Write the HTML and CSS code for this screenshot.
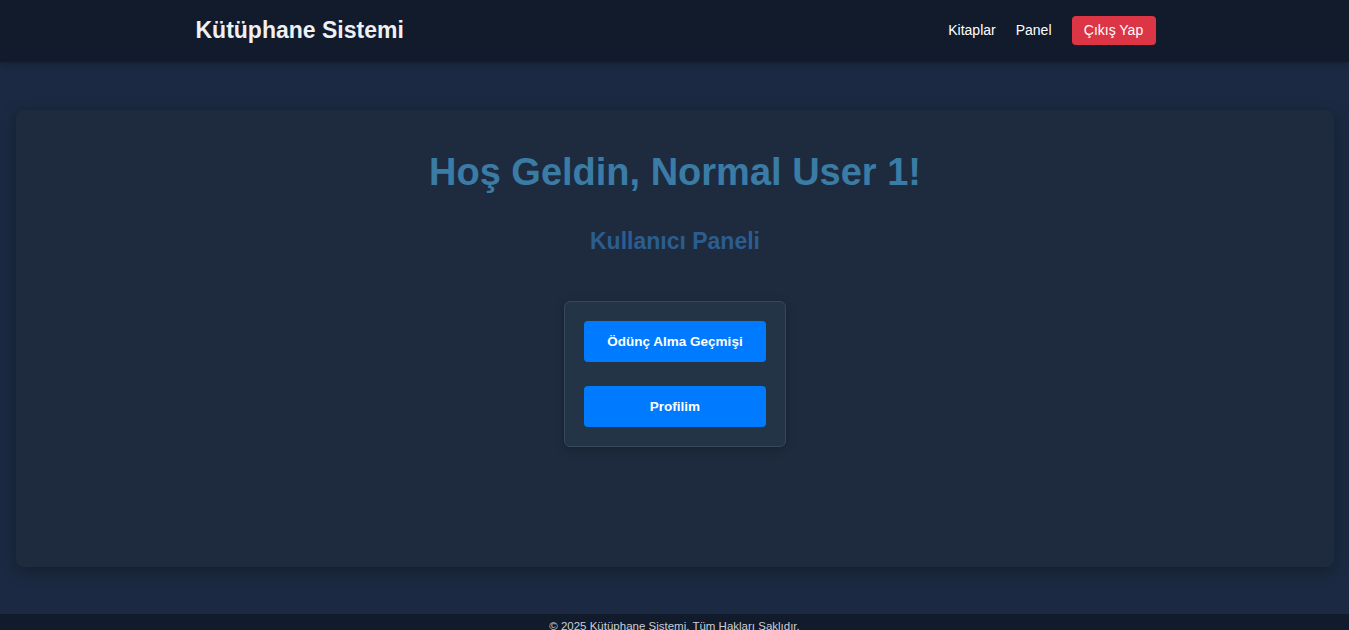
FILE: index.html
```html
<!DOCTYPE html>
<html lang="tr">
<head>
<meta charset="utf-8">
<title>Kütüphane Sistemi</title>
<link rel="stylesheet" href="styles.css">
</head>
<body>
<nav class="navbar">
  <div class="nav-inner">
    <a class="brand" href="#">Kütüphane Sistemi</a>
    <div class="nav-links">
      <a class="nav-link" href="#">Kitaplar</a>
      <a class="nav-link" href="#">Panel</a>
      <a class="logout" href="#">Çıkış Yap</a>
    </div>
  </div>
</nav>
<main class="main">
  <section class="card">
    <h1 class="title">Hoş Geldin, Normal User 1!</h1>
    <h2 class="subtitle">Kullanıcı Paneli</h2>
    <div class="panel">
      <a class="btn" href="#">Ödünç Alma Geçmişi</a>
      <a class="btn" href="#">Profilim</a>
    </div>
  </section>
</main>
<footer class="footer">© 2025 Kütüphane Sistemi. Tüm Hakları Saklıdır.</footer>
</body>
</html>
```
FILE: styles.css
```css
* { box-sizing: border-box; }
html, body { margin: 0; padding: 0; }
body {
  background: #1b2a42;
  font-family: "Liberation Sans", Arial, sans-serif;
  color: #e5e7eb;
}
a { text-decoration: none; }
.navbar {
  background: #111b2b;
  height: 62px;
  box-shadow: 0 2px 6px rgba(0,0,0,0.25);
}
.nav-inner {
  width: 960px;
  margin: 0 auto;
  height: 100%;
  display: flex;
  align-items: center;
  justify-content: space-between;
  padding: 0 0 2px 0;
  position: relative;
  left: 1px;
}
.brand {
  color: #eef0f4;
  font-size: 23px;
  font-weight: bold;
}
.nav-links {
  display: flex;
  align-items: center;
}
.nav-link {
  color: #ffffff;
  font-size: 14px;
  margin-right: 20px;
}
.logout {
  background: #dc3545;
  color: #fff;
  font-size: 14px;
  padding: 6px 0;
  border-radius: 4px;
  line-height: 17px;
  display: inline-block;
  width: 84px;
  text-align: center;
}
.main {
  padding: 48px 15px 47px 16px;
}
.card {
  background: #1e2b3f;
  border-radius: 8px;
  min-height: 457px;
  padding: 20px 20px 20px;
  text-align: center;
  box-shadow: 0 4px 16px rgba(0,0,0,0.3);
}
.title {
  margin: 22px 0 0;
  font-size: 38px;
  line-height: 41px;
  color: #3a7ca5;
  font-weight: bold;
}
.subtitle {
  margin: 34px 0 0;
  font-size: 23px;
  line-height: 28px;
  color: #2c5d8f;
  font-weight: bold;
}
.panel {
  margin: 46px auto 0;
  width: 222px;
  background: #243447;
  border: 1px solid #34485e;
  border-radius: 6px;
  padding: 19px;
  display: flex;
  flex-direction: column;
  gap: 24px;
  box-shadow: 0 2px 10px rgba(0,0,0,0.25);
}
.btn {
  display: block;
  background: #007bff;
  color: #fff;
  font-size: 13.5px;
  font-weight: bold;
  height: 41px;
  line-height: 41px;
  border-radius: 4px;
  text-align: center;
}
.footer {
  background: #111b2b;
  color: #c9ced6;
  font-size: 11.5px;
  text-align: center;
  padding: 6px 0 10px;
}
```
